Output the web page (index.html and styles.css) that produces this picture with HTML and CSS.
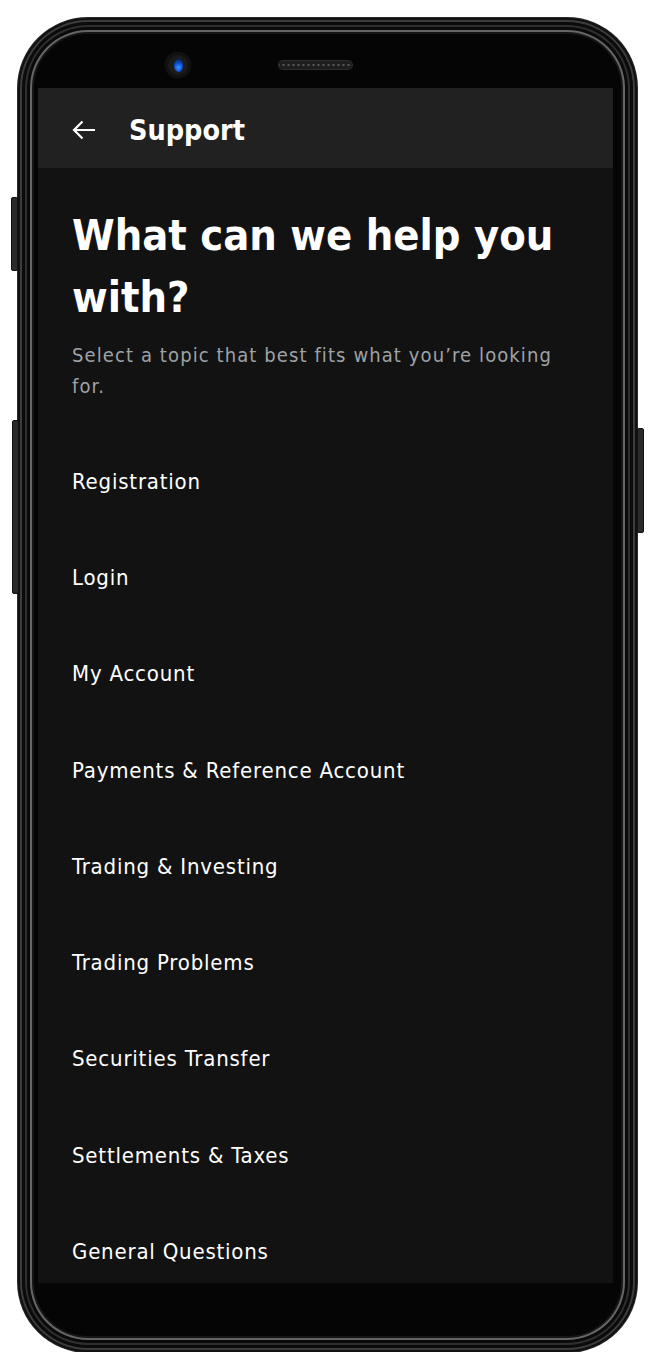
FILE: index.html
```html
<!DOCTYPE html>
<html lang="en">
<head>
    <meta charset="UTF-8">
    <meta name="viewport" content="width=device-width, initial-scale=1.0">
    <title>Support</title>
    <link rel="stylesheet" href="styles.css">
</head>
<body>
    <div class="phone">
        <span class="side-btn vol-up"></span>
        <span class="side-btn vol-down"></span>
        <span class="side-btn power"></span>
        <div class="bezel-top">
            <span class="camera"><span class="lens"></span></span>
            <span class="speaker"></span>
        </div>
        <div class="screen">
            <div class="app-bar">
                <svg class="back" width="24" height="20" viewBox="0 0 24 20">
                    <path d="M23 10H2M10.5 1.5L2 10l8.5 8.5" fill="none" stroke="#fff" stroke-width="2.2"/>
                </svg>
                <h1>Support</h1>
            </div>
            <div class="content">
                <h2>What can we help you with?</h2>
                <p class="lead">Select a topic that best fits what you’re looking for.</p>
                <ul class="topics">
                    <li>Registration</li>
                    <li>Login</li>
                    <li>My Account</li>
                    <li>Payments &amp; Reference Account</li>
                    <li>Trading &amp; Investing</li>
                    <li>Trading Problems</li>
                    <li>Securities Transfer</li>
                    <li>Settlements &amp; Taxes</li>
                    <li>General Questions</li>
                </ul>
            </div>
        </div>
        <div class="bezel-bottom"></div>
    </div>
</body>
</html>
```

FILE: styles.css
```css
body {
    margin: 0;
    background: #fff;
    font-family: "DejaVu Sans Condensed", "DejaVu Sans", sans-serif;
}
.phone {
    position: relative;
    width: 619px;
    height: 1334px;
    margin: 18px 0 0 18px;
    box-sizing: border-box;
    padding: 0 24px 0 20px;
    border-radius: 70px;
    background: #050505;
    box-shadow: 0 0 0 1px #2a2a2a,
        inset 0 0 0 2px #111,
        inset 0 0 0 4px #3c3c3c,
        inset 0 0 0 7px #0b0b0b,
        inset 0 0 0 9px #2e2e2e,
        inset 0 0 0 12px #0a0a0a,
        inset 0 0 0 14px #666,
        inset 0 0 0 16px #161616;
    display: flex;
    flex-direction: column;
}
.side-btn {
    position: absolute;
    width: 5px;
    background: #2a2a2a;
    border: 1px solid #111;
    border-radius: 2px;
}
.vol-up {
    left: -7px;
    top: 179px;
    height: 72px;
}
.vol-down {
    left: -6px;
    top: 402px;
    height: 172px;
}
.power {
    right: -7px;
    top: 410px;
    height: 103px;
}
.bezel-top {
    height: 70px;
    display: flex;
    align-items: center;
    padding-top: 24px;
    box-sizing: border-box;
}
.camera {
    width: 20px;
    height: 20px;
    margin-left: 130px;
    border-radius: 50%;
    background: #1b1b1b;
    box-shadow: 0 0 0 2px #111, 0 0 3px 2px #2a2a2a;
    display: flex;
    align-items: center;
    justify-content: center;
}
.lens {
    width: 9px;
    height: 13px;
    border-radius: 50%;
    background: radial-gradient(circle at 50% 65%, #3a95ff 0, #0d4bd0 45%, #061a44 100%);
}
.speaker {
    width: 75px;
    height: 10px;
    margin-left: 90px;
    border-radius: 5px;
    background: #1e1e1e radial-gradient(circle, #5a5a5a 0.9px, transparent 1.3px) 3px 0 / 5px 10px repeat-x;
    box-shadow: inset 0 0 0 1px #2c2c2c;
}
.screen {
    height: 1195px;
    background: #121212;
    overflow: hidden;
    color: #fff;
}
.app-bar {
    height: 80px;
    box-sizing: border-box;
    padding: 4px 0 0 34px;
    background: #212121;
    display: flex;
    align-items: center;
    gap: 33px;
}
.back {
    display: block;
}
.app-bar h1 {
    margin: 0;
    font-size: 28.5px;
    font-weight: bold;
}
.content {
    padding: 0 34px;
}
.content h2 {
    margin: 36px 0 0;
    font-size: 43px;
    line-height: 62px;
    font-weight: bold;
}
.lead {
    margin: 12px 0 0;
    font-size: 20px;
    line-height: 31px;
    color: #9ea2a7;
    letter-spacing: 1.1px;
}
.topics {
    list-style: none;
    margin: 31px 0 0;
    padding: 0;
}
.topics li {
    height: 96.3px;
    display: flex;
    align-items: center;
    font-size: 22px;
    letter-spacing: 0.8px;
}
.bezel-bottom {
    flex: 1;
}
```
